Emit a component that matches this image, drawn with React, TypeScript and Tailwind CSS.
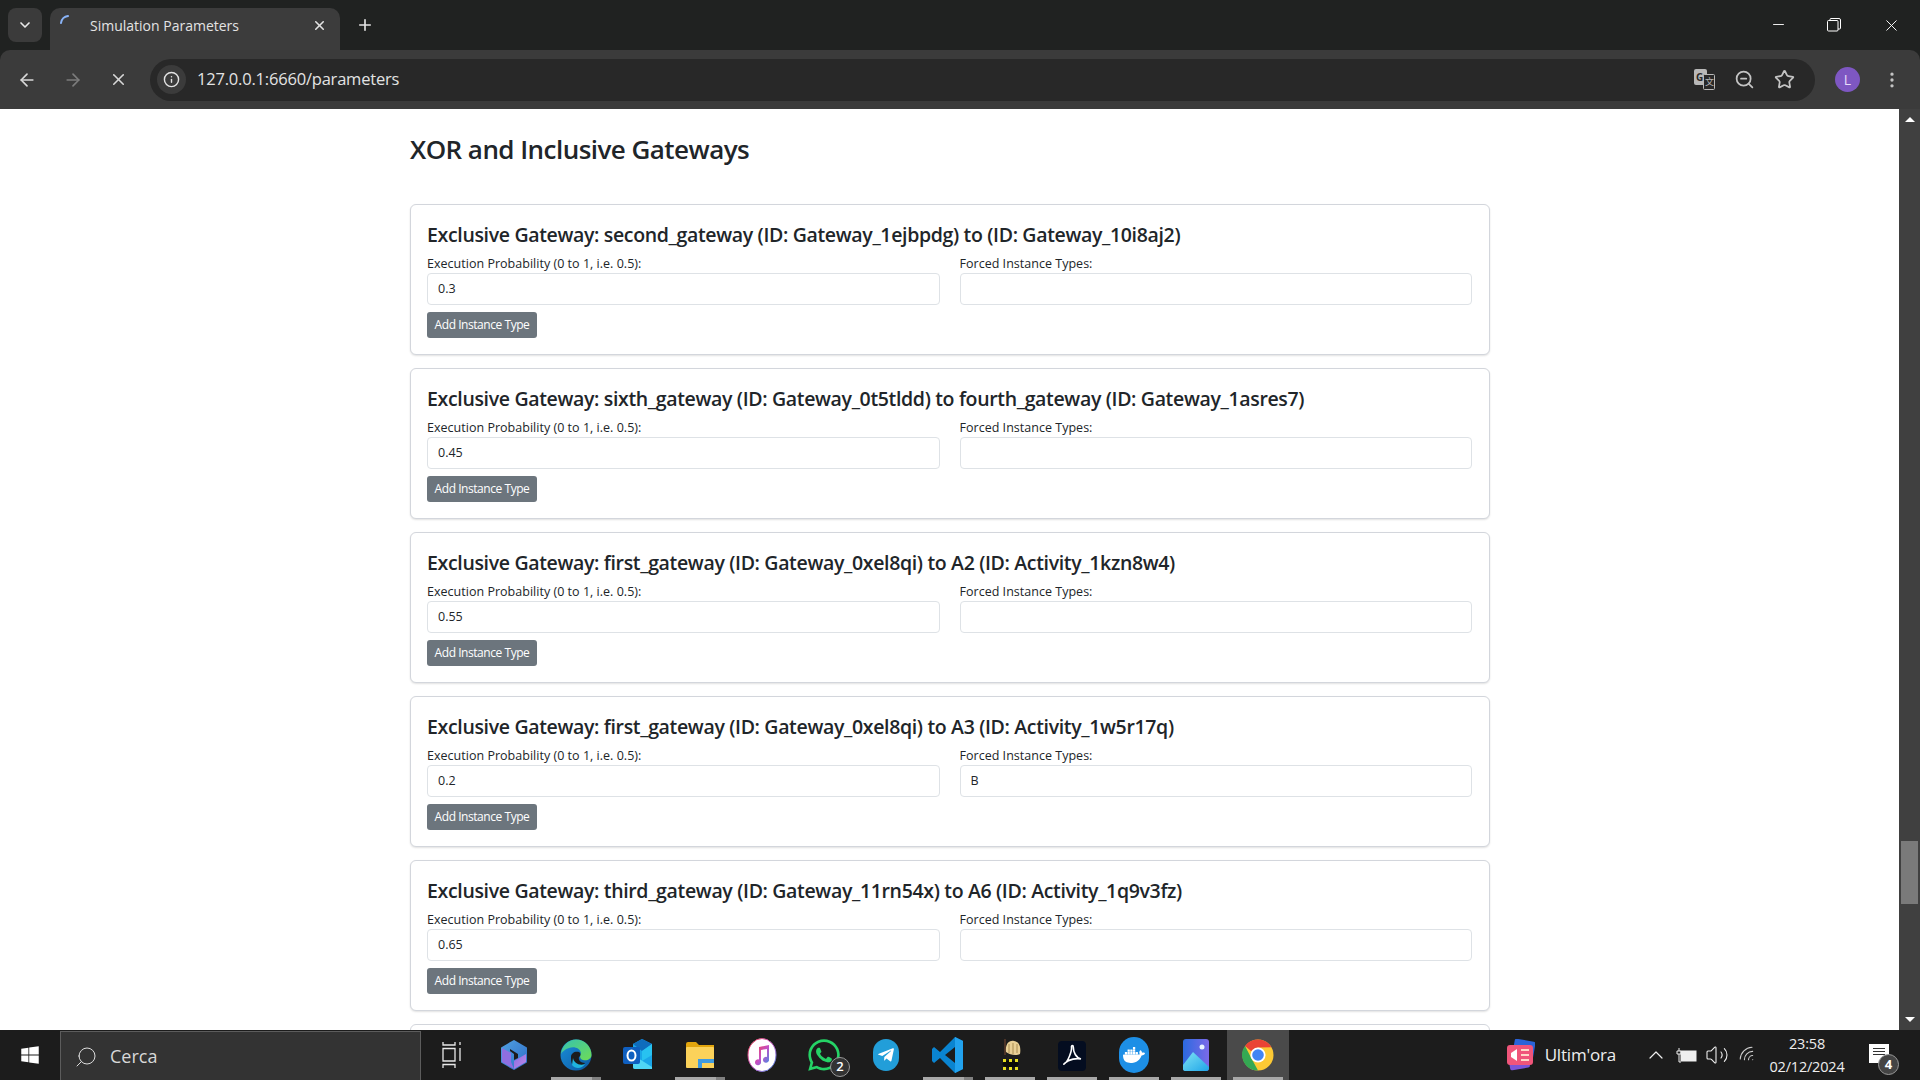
import React from "react";
import { ChevronDown, X, Plus, ArrowLeft, ArrowRight, Info, ZoomOut, Star, Minus, EllipsisVertical, Search, ChevronUp, Volume2, Wifi } from "lucide-react";
import { FaWindows, FaWhatsapp, FaTelegramPlane } from "react-icons/fa";
import { SiDocker } from "react-icons/si";

const cards = [
  { title: "Exclusive Gateway: second_gateway (ID: Gateway_1ejbpdg) to (ID: Gateway_10i8aj2)", p: "0.3", f: "" },
  { title: "Exclusive Gateway: sixth_gateway (ID: Gateway_0t5tldd) to fourth_gateway (ID: Gateway_1asres7)", p: "0.45", f: "" },
  { title: "Exclusive Gateway: first_gateway (ID: Gateway_0xel8qi) to A2 (ID: Activity_1kzn8w4)", p: "0.55", f: "" },
  { title: "Exclusive Gateway: first_gateway (ID: Gateway_0xel8qi) to A3 (ID: Activity_1w5r17q)", p: "0.2", f: "B" },
  { title: "Exclusive Gateway: third_gateway (ID: Gateway_11rn54x) to A6 (ID: Activity_1q9v3fz)", p: "0.65", f: "" },
];

function Card({ title, p, f }: { title: string; p: string; f: string }) {
  return (
    <div className="h-[151px] shrink-0 rounded-[6px] border border-[#d3d6dc] shadow-[0_1px_2px_rgba(0,0,0,0.12)] px-[16px] pt-[17px] mb-[13px] bg-white">
      <div className="text-[19.5px] leading-[26px] font-semibold text-[#212529] tracking-[-0.34px] whitespace-nowrap">{title}</div>
      <div className="grid grid-cols-2 gap-x-[20px] mt-[8px] pr-[1px]">
        <div>
          <div className="text-[12.5px] leading-[16px] text-[#212529] tracking-[0.02px]">Execution Probability (0 to 1, i.e. 0.5):</div>
          <div className="mt-[1px] h-[32px] rounded-[4px] border border-[#dee2e6] flex items-center px-[10px] pt-[1px] text-[12.5px] text-[#212529]">{p}</div>
        </div>
        <div>
          <div className="text-[12.5px] leading-[16px] text-[#212529] tracking-[0.02px]">Forced Instance Types:</div>
          <div className="mt-[1px] h-[32px] rounded-[4px] border border-[#dee2e6] flex items-center px-[10px] pt-[1px] text-[12.5px] text-[#212529]">{f}</div>
        </div>
      </div>
      <div className="mt-[7px] w-[110px] h-[26px] rounded-[3px] bg-[#6c757d] text-white text-[12px] tracking-[-0.45px] flex items-center justify-center">Add Instance Type</div>
    </div>
  );
}

function Copilot() {
  return (
    <svg width="28" height="30" viewBox="0 0 28 30">
      <defs>
        <linearGradient id="cpa" x1="0" y1="0" x2="1" y2="1"><stop offset="0" stopColor="#4f9fe0" /><stop offset="1" stopColor="#2f6fc8" /></linearGradient>
        <linearGradient id="cpb" x1="0" y1="0" x2="1" y2="1"><stop offset="0" stopColor="#8a6be0" /><stop offset="1" stopColor="#c08ae8" /></linearGradient>
      </defs>
      <path d="M14 1 L26 8 V22 L14 29 L2 22 V8 Z" fill="url(#cpa)" stroke="url(#cpa)" strokeWidth="2" strokeLinejoin="round" />
      <path d="M2 8 L11 13 V22 L14 29 L2 22 Z" fill="#8f6fe0" />
      <path d="M14 29 L26 22 V14 L14 21 Z" fill="url(#cpb)" />
      <path d="M10 9 L18 14 V18 L14 20 V14 L10 11 Z" fill="#1c1c1c" />
    </svg>
  );
}
function Edge() {
  return (
    <svg width="32" height="34" viewBox="0 0 32 32">
      <defs>
        <linearGradient id="eg1" x1="0" y1="0" x2="1" y2="1"><stop offset="0" stopColor="#35c2b0" /><stop offset="1" stopColor="#6fdc55" /></linearGradient>
        <linearGradient id="eg2" x1="0" y1="0" x2="1" y2="1"><stop offset="0" stopColor="#1a8fd8" /><stop offset="1" stopColor="#0c59a4" /></linearGradient>
      </defs>
      <circle cx="16" cy="16" r="15.5" fill="url(#eg2)" />
      <path d="M1 15 C2 6 9 .5 16 .5 C25 .5 31.5 8 31.5 16 C31.5 20 27 22 23 21 C19 20 20 16 21 14 C20 9 14 7 9 9 C5 10 2 13 1 15 Z" fill="url(#eg1)" />
      <path d="M11 18 C11 14 15 12 19 13 C21 14 21 17 19 18 C18 21 21 24 25 24 C22 29 15 29 12 25 C11 23 11 20 11 18 Z" fill="#1c1c1c" />
      <path d="M13 19 C14 24 19 27 25 25 C22 30 15 30 12 26 Z" fill="#1fb4de" />
    </svg>
  );
}
function Outlook() {
  return (
    <svg width="32" height="32" viewBox="0 0 32 32">
      <path d="M11 5 L20 0 L30 5 V28 Q30 30 28 30 H13 Q11 30 11 28 Z" fill="#1aa6e8" />
      <path d="M11 5 L20 0 L30 5 L20 12 Z" fill="#0f6cbd" />
      <path d="M20 12 L30 5 V16 L20 22 Z" fill="#28c2f0" />
      <path d="M11 16 L30 28 V30 H13 Q11 30 11 28 Z" fill="#4fd6f5" />
      <rect x="1" y="8" width="17" height="17" rx="2" fill="#0f5fc0" />
      <ellipse cx="9.5" cy="16.5" rx="4" ry="5" fill="none" stroke="#fff" strokeWidth="2" />
    </svg>
  );
}
function Explorer() {
  return (
    <svg width="28" height="26" viewBox="0 0 28 26">
      <path d="M0 2 Q0 0 2 0 H10 L13 3 H28 V7 H0 Z" fill="#e2a50d" />
      <rect x="0" y="5" width="28" height="21" rx="1" fill="#fbd25a" />
      <rect x="12" y="17" width="16" height="9" fill="#3f9be0" />
      <rect x="16" y="21" width="12" height="5" fill="#fbd25a" />
    </svg>
  );
}
function Music() {
  return (
    <svg width="30" height="34" viewBox="0 0 30 34">
      <defs>
        <linearGradient id="mu" x1="0" y1="0" x2="1" y2="1"><stop offset="0" stopColor="#f0444e" /><stop offset="0.5" stopColor="#c64fc4" /><stop offset="1" stopColor="#3f8ee8" /></linearGradient>
      </defs>
      <ellipse cx="15" cy="17" rx="14" ry="16.5" fill="#fff" stroke="url(#mu)" strokeWidth="1" />
      <path d="M12 9 L22 7 V21.5 A3 3 0 1 1 20 19 V11 L14 12 V24 A3 3 0 1 1 12 21.5 Z" fill="url(#mu)" />
    </svg>
  );
}
function Vscode() {
  return (
    <svg width="32" height="36" viewBox="0 0 32 36">
      <path d="M23 0 L31 4 V32 L23 36 L8 21 L2 26 L0 24 V12 L2 10 L8 15 Z M23 10 L13 18 L23 26 Z" fill="#0a84d0" />
      <path d="M23 0 L31 4 V32 L23 36 Z" fill="#22a2ee" />
    </svg>
  );
}
function Ghost() {
  return (
    <svg width="26" height="34" viewBox="0 0 26 34">
      <path d="M8 1 V17" stroke="#5a3a2a" strokeWidth="1.5" />
      <path d="M9 14 C8 5 13 2 17 3 C23 4 24 10 23 16 C19 18 13 17 9 14 Z" fill="#e8cf95" />
      <path d="M12 6 V15 M16 5 V16 M20 6 V15" stroke="#a88c50" strokeWidth="1" />
      <path d="M5 26 C9 21 18 21 22 26 C18 31 9 31 5 26 Z" fill="#0a0a06" />
      <rect x="6" y="21" width="3" height="3" fill="#e8e020" />
      <rect x="18" y="21" width="3" height="3" fill="#e8e020" />
      <rect x="6" y="29" width="3" height="3" fill="#e8e020" />
      <rect x="18" y="29" width="3" height="3" fill="#e8e020" />
      <rect x="12" y="29" width="3" height="3" fill="#e8e020" />
      <rect x="12" y="21" width="3" height="3" fill="#e8e020" />
    </svg>
  );
}
function Acrobat() {
  return (
    <svg width="28" height="32" viewBox="0 0 28 32">
      <rect x="0" y="2" width="28" height="30" rx="4" fill="#040d20" />
      <path d="M6 25 C10 23 14 12 13.5 8 C13.3 6 15.3 6 15.3 8 C15.3 13 18 19 23 20 C19 19 11 20 7 24 C6 25 5.5 25.6 6 25 Z" fill="none" stroke="#fff" strokeWidth="1.6" />
    </svg>
  );
}
function Photos() {
  return (
    <svg width="26" height="32" viewBox="0 0 26 32">
      <defs>
        <linearGradient id="ph" x1="0" y1="0" x2="1" y2="0"><stop offset="0" stopColor="#2b6ae0" /><stop offset="1" stopColor="#7b6ae8" /></linearGradient>
        <linearGradient id="ph2" x1="0" y1="0" x2="1" y2="1"><stop offset="0" stopColor="#7fe3f5" /><stop offset="1" stopColor="#1fa5e8" /></linearGradient>
      </defs>
      <rect x="0" y="0" width="26" height="32" rx="3" fill="url(#ph)" />
      <circle cx="19" cy="8" r="2.5" fill="#e8f4ff" />
      <path d="M0 30 V26 L10 13 L26 28 V29 Q26 32 23 32 H3 Q0 32 0 30 Z" fill="url(#ph2)" />
    </svg>
  );
}
function Chrome() {
  return (
    <svg width="32" height="32" viewBox="0 0 32 32">
      <circle cx="16" cy="16" r="15.5" fill="#fcc934" />
      <path d="M16 .5 A15.5 15.5 0 0 1 29.4 8.2 L16 8.5 L9 12 L3 7 A15.5 15.5 0 0 1 16 .5 Z" fill="#ea4335" />
      <path d="M3 7 L9.5 19.5 L16 31.5 A15.5 15.5 0 0 1 3 7 Z" fill="#34a853" />
      <circle cx="16" cy="16" r="7.6" fill="#fff" />
      <circle cx="16" cy="16" r="5.8" fill="#4285f4" />
    </svg>
  );
}
function News() {
  return (
    <svg width="30" height="32" viewBox="0 0 30 32">
      <rect x="8" y="1" width="21" height="22" rx="2" fill="#2a63d8" transform="rotate(10 18 12)" />
      <rect x="4" y="14" width="20" height="16" rx="2" fill="#7a55d8" transform="rotate(-10 14 22)" />
      <rect x="2" y="6" width="26" height="20" rx="3" fill="#f0557a" />
      <path d="M6 14 L12 10 V22 L6 18 Z" fill="#fff" />
      <path d="M16 11 H24 M16 16 H24 M16 21 H24" stroke="#ffd9c8" strokeWidth="2" />
    </svg>
  );
}

function Item({ children, under, active, split }: { children: React.ReactNode; under?: boolean; active?: boolean; split?: boolean }) {
  return (
    <div className={`relative w-[62px] h-[50px] flex items-center justify-center ${active ? "bg-[#4a4a4a]" : ""}`}>
      {children}
      {under && <div className="absolute left-[6px] right-[6px] bottom-0 h-[3px] bg-[#a8a8a8]" />}
      {split && <div className="absolute right-[6px] bottom-0 w-[9px] h-[3px] bg-[#808080]" />}
    </div>
  );
}

export default function App() {
  return (
    <div className="w-[1920px] h-[1080px] overflow-hidden flex flex-col bg-[#202221] font-['Open_Sans',sans-serif]">
      {/* tab strip */}
      <div className="h-[50px] shrink-0 bg-[#202221] flex items-end pl-[8px] text-white">
        <div className="w-[34px] h-[34px] mb-[8px] rounded-[8px] bg-[#3b3b3b] flex items-center justify-center">
          <ChevronDown size={16} strokeWidth={2.5} color="#e8e8e8" />
        </div>
        <div className="ml-[8px] w-[290px] h-[42px] rounded-t-[10px] bg-[#3c3c3c] flex items-center pb-[8px] relative">
          <svg className="absolute left-[9px] top-[5px]" width="16" height="16" viewBox="0 0 16 16">
            <path d="M2 10 A8 8 0 0 1 9 3" fill="none" stroke="#8ab4f8" strokeWidth="2" strokeLinecap="round" />
          </svg>
          <span className="ml-[40px] text-[14px] text-[#e3e3e3]">Simulation Parameters</span>
          <X size={15} strokeWidth={2.5} color="#e3e3e3" className="absolute right-[13px] top-[10px]" />
        </div>
        <div className="ml-[15px] mb-[15px] w-[20px] h-[20px] flex items-center justify-center">
          <Plus size={18} strokeWidth={2.2} color="#e3e3e3" />
        </div>
        <div className="ml-auto flex h-[50px] items-start">
          <div className="w-[56px] flex justify-center pt-[16px]"><Minus size={17} strokeWidth={1.3} color="#fff" /></div>
          <div className="w-[56px] flex justify-center pt-[18px]">
            <svg width="14" height="14" viewBox="0 0 14 14" fill="none" stroke="#fff"><rect x=".5" y="2.5" width="10.5" height="10.5" rx="1" /><path d="M3 2.5 V1.5 Q3 .5 4 .5 H12 Q13.5 .5 13.5 2 V10 Q13.5 11 12.5 11 H11" /></svg>
          </div>
          <div className="w-[58px] flex justify-center pt-[16px]"><X size={19} strokeWidth={1.2} color="#fff" /></div>
        </div>
      </div>
      {/* toolbar */}
      <div className="h-[59px] shrink-0 bg-[#3b3b3b] flex items-center rounded-t-[10px]">
        <div className="w-[46px] ml-[4px] flex justify-center"><ArrowLeft size={20} color="#d8d8d8" strokeWidth={2} /></div>
        <div className="w-[46px] flex justify-center"><ArrowRight size={20} color="#7c7c7c" strokeWidth={2} /></div>
        <div className="w-[44px] flex justify-center"><X size={19} color="#d8d8d8" strokeWidth={2} /></div>
        <div className="ml-[10px] w-[1665px] h-[42px] rounded-full bg-[#282828] flex items-center pl-[7px] pr-[20px]">
          <div className="w-[29px] h-[29px] rounded-full bg-[#3b3b3b] flex items-center justify-center"><Info size={17} color="#e3e3e3" strokeWidth={2} /></div>
          <span className="ml-[11px] text-[16.5px] text-[#e3e3e3] tracking-[-0.2px]">127.0.0.1:6660/parameters</span>
          <div className="ml-auto flex items-center gap-[19px]">
            <svg width="21" height="21" viewBox="0 0 21 21">
              <rect x="0" y="0" width="13" height="16" rx="2" fill="#b8b8b8" />
              <text x="2" y="12" fontSize="10" fontWeight="700" fill="#282828" fontFamily="Open Sans">G</text>
              <rect x="9.5" y="5.5" width="11" height="15" rx="1" fill="#282828" stroke="#b8b8b8" />
              <text x="11" y="16" fontSize="9" fill="#b8b8b8" fontFamily="Noto Sans CJK SC">文</text>
            </svg>
            <ZoomOut size={21} color="#c4c4c4" strokeWidth={2} />
            <Star size={21} color="#c4c4c4" strokeWidth={2} />
          </div>
        </div>
        <div className="ml-[20px] w-[25px] h-[25px] rounded-full bg-[#7e57c2] flex items-center justify-center text-[14px] text-[#e8dcfa]">L</div>
        <div className="ml-[22px]"><EllipsisVertical size={20} color="#c4c4c4" /></div>
      </div>
      {/* page */}
      <div className="flex-1 min-h-0 flex bg-white">
        <div className="flex-1 min-w-0 overflow-hidden">
          <div className="w-[1080px] ml-[410px] flex flex-col">
            <div className="h-[95px] pt-[20px] text-[26px] leading-[40px] font-semibold text-[#212529] tracking-[-0.54px]">XOR and Inclusive Gateways</div>
            {cards.map((c) => <Card key={c.title} {...c} />)}
            <div className="h-[151px] shrink-0 rounded-[6px] border border-[#d3d6dc] bg-white" />
          </div>
        </div>
        <div className="w-[21px] shrink-0 bg-[#404040] flex flex-col items-center justify-between py-[8px]">
          <div className="w-0 h-0 border-l-[5px] border-r-[5px] border-b-[5px] border-l-transparent border-r-transparent border-b-white" />
          <div className="w-[17px] h-[63px] bg-[#7a7a7a] mt-[717px]" />
          <div className="w-0 h-0 mt-[111px] border-l-[5px] border-r-[5px] border-t-[5px] border-l-transparent border-r-transparent border-t-white" />
        </div>
      </div>
      {/* taskbar */}
      <div className="h-[50px] shrink-0 bg-[#1c1c1c] flex items-center text-white">
        <div className="w-[60px] flex justify-center"><FaWindows size={20} color="#fff" /></div>
        <div className="w-[361px] h-[50px] mt-[2px] bg-[#333333] border border-[#5c5c5c] border-b-0 flex items-center pl-[13px]">
          <Search size={24} strokeWidth={1} color="#ddd" className="-scale-x-100" />
          <span className="ml-[12px] text-[18px] text-[#d8d8d8]">Cerca</span>
        </div>
        <Item>
          <svg width="20" height="26" viewBox="0 0 20 26" fill="none" stroke="#e8e8e8" strokeWidth="1.3"><path d="M1 0 V3 H13 V0 M1 6.5 H13 V19 H1 Z M1 26 V22.5 H13 V26 M18 0 V3 M18 6 V19" /></svg>
        </Item>
        <Item><Copilot /></Item>
        <Item under split><Edge /></Item>
        <Item><Outlook /></Item>
        <Item under split><Explorer /></Item>
        <Item><Music /></Item>
        <Item>
          <FaWhatsapp size={36} color="#25d366" />
          <div className="absolute left-[37px] top-[27px] w-[20px] h-[20px] rounded-full bg-[#333] border border-[#999] flex items-center justify-center text-[13px] font-semibold text-white">2</div>
        </Item>
        <Item>
          <div className="w-[26px] h-[32px] rounded-full bg-[#229ed9] flex items-center justify-center"><FaTelegramPlane size={18} color="#fff" /></div>
        </Item>
        <Item under split><Vscode /></Item>
        <Item under><Ghost /></Item>
        <Item under><Acrobat /></Item>
        <Item under>
          <div className="w-[30px] h-[36px] rounded-full bg-[#1d8fe6] flex items-center justify-center"><SiDocker size={22} color="#fff" /></div>
        </Item>
        <Item under><Photos /></Item>
        <Item under active><Chrome /></Item>
        <div className="ml-auto flex items-center h-[50px]">
          <News />
          <span className="ml-[10px] text-[17px] text-[#eee] tracking-[-0.2px]">Ultim'ora</span>
          <ChevronUp size={24} strokeWidth={1.2} color="#eee" className="ml-[28px]" />
          <svg className="ml-[8px]" width="21" height="15" viewBox="0 0 21 15" fill="none" stroke="#eee"><rect x="5" y="3" width="15" height="10" fill="#eee" /><path d="M3 0 V3 M1 3 H5 V6 H1 Z M3 6 V14 H5" /></svg>
          <Volume2 size={24} strokeWidth={1.1} color="#eee" className="ml-[8px]" />
          <Wifi size={20} strokeWidth={1.3} color="#ccc" className="ml-[9px] -rotate-45" />
          <div className="-ml-[5px] w-[108px] text-center text-[14.5px] leading-[23px] text-[#eee] tracking-[-0.2px]">
            <div>23:58</div>
            <div>02/12/2024</div>
          </div>
          <div className="relative w-[51px] h-[50px] ml-[8px] flex items-start pt-[14px]">
            <div className="w-[20px] h-[19px] bg-white flex flex-col gap-[2px] px-[4px] pt-[4px]">
              <div className="h-[1px] bg-[#333]" /><div className="h-[1px] bg-[#333]" /><div className="h-[1px] bg-[#333]" />
            </div>
            <div className="absolute left-[9px] top-[24px] w-[21px] h-[21px] rounded-full bg-[#444] border border-[#999] flex items-center justify-center text-[13px] font-bold text-white">4</div>
          </div>
        </div>
      </div>
    </div>
  );
}
